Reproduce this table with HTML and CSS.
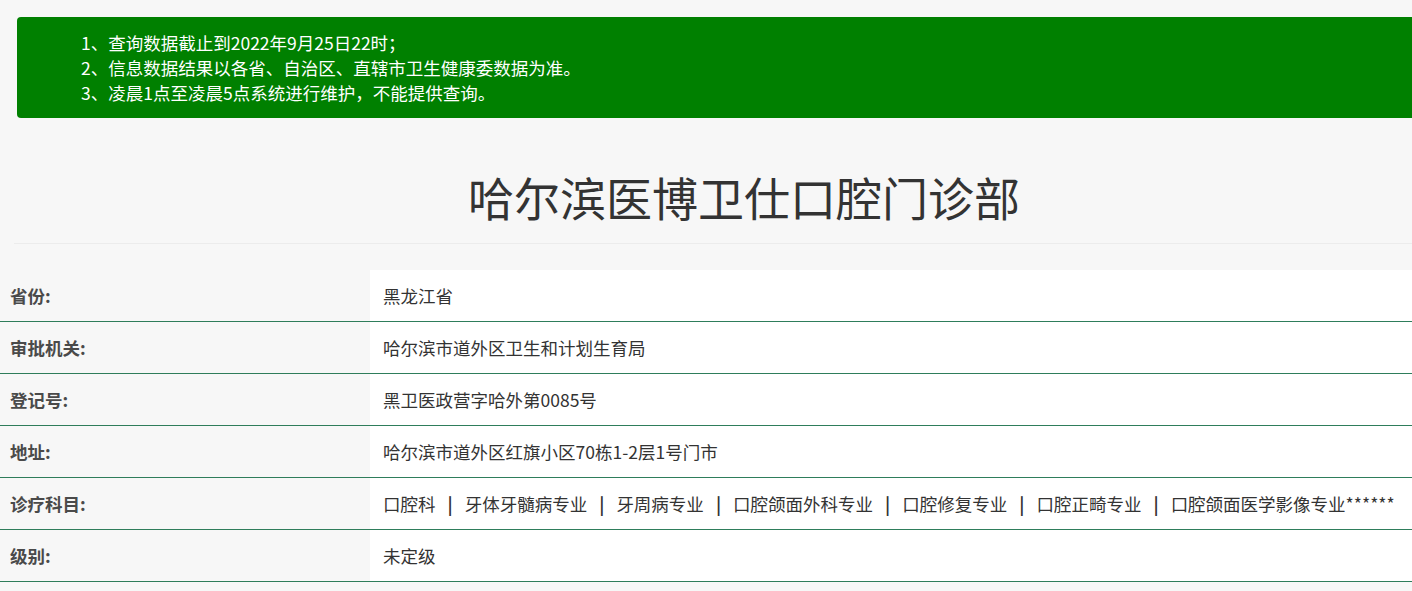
FILE: index.html
```html
<!DOCTYPE html>
<html lang="zh-CN">
<head>
<meta charset="utf-8">
<title>哈尔滨医博卫仕口腔门诊部</title>
<link rel="stylesheet" href="styles.css">
</head>
<body>
<div class="notice">
  <p>1、查询数据截止到2022年9月25日22时；</p>
  <p>2、信息数据结果以各省、自治区、直辖市卫生健康委数据为准。</p>
  <p>3、凌晨1点至凌晨5点系统进行维护，不能提供查询。</p>
</div>
<h1 class="title">哈尔滨医博卫仕口腔门诊部</h1>
<div class="rule"></div>
<div class="info">
  <div class="row"><div class="label">省份:</div><div class="value">黑龙江省</div></div>
  <div class="row"><div class="label">审批机关:</div><div class="value">哈尔滨市道外区卫生和计划生育局</div></div>
  <div class="row"><div class="label">登记号:</div><div class="value">黑卫医政营字哈外第0085号</div></div>
  <div class="row"><div class="label">地址:</div><div class="value">哈尔滨市道外区红旗小区70栋1-2层1号门市</div></div>
  <div class="row"><div class="label">诊疗科目:</div><div class="value">口腔科<span class="sep">|</span>牙体牙髓病专业<span class="sep">|</span>牙周病专业<span class="sep">|</span>口腔颌面外科专业<span class="sep">|</span>口腔修复专业<span class="sep">|</span>口腔正畸专业<span class="sep">|</span>口腔颌面医学影像专业******</div></div>
  <div class="row"><div class="label">级别:</div><div class="value">未定级</div></div>
</div>
</body>
</html>
```

FILE: styles.css
```css
html, body {
  margin: 0;
  padding: 0;
  background: #f7f7f7;
  font-family: "Noto Sans CJK SC", "Microsoft YaHei", sans-serif;
  color: #333;
  overflow: hidden;
}
.notice {
  margin: 17px 0 0 17px;
  width: 1420px;
  background: #008000;
  border-radius: 4px 0 0 4px;
  color: #fff;
  font-size: 17.5px;
  line-height: 25px;
  padding: 13px 0 13px 64px;
  box-sizing: border-box;
  height: 101px;
}
.notice p {
  margin: 0;
  white-space: nowrap;
}
.title {
  margin: 50px 0 0 0;
  text-align: center;
  font-size: 46px;
  font-weight: normal;
  line-height: 56px;
  color: #333;
  padding-left: 76px;
}
.rule {
  margin: 19px 0 0 14px;
  height: 1px;
  background: #ececec;
}
.info {
  margin-top: 26px;
  width: 1420px;
}
.row {
  display: flex;
  height: 51px;
  border-bottom: 1px solid #2e7d5b;
  font-size: 17.5px;
}
.label {
  width: 370px;
  flex: none;
  box-sizing: border-box;
  padding-left: 10px;
  display: flex;
  align-items: center;
  font-weight: bold;
  color: #4a4a4a;
  background: #f7f7f7;
}
.value {
  flex: 1;
  background: #fff;
  display: flex;
  align-items: center;
  padding-left: 13px;
  white-space: pre;
  color: #333;
}
.sep {
  font-weight: bold;
  color: #333;
  margin: 0 12px;
}
```
